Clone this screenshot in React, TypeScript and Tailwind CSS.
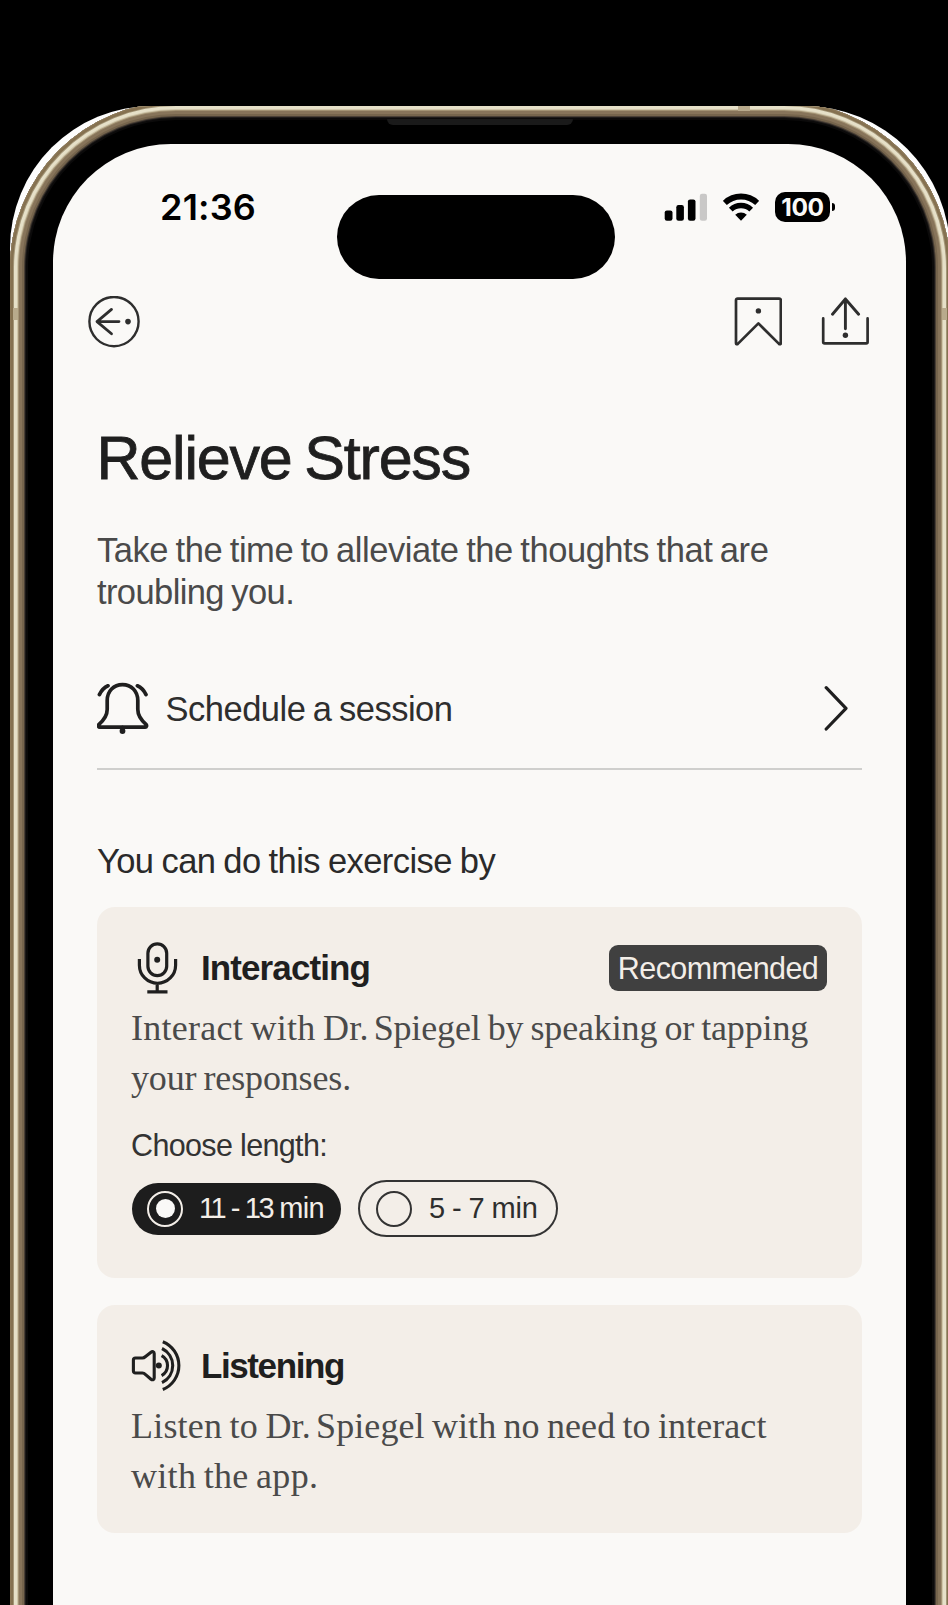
import React from "react";

const ink = "#1f1f1f";

function BackIcon() {
  return (
    <svg width="52" height="52" viewBox="0 0 52 52" fill="none" stroke="#2e2e2e" strokeWidth="2.4" strokeLinecap="round" strokeLinejoin="round">
      <circle cx="26" cy="25.6" r="24.6" />
      <path d="M23.5 13.4 9 25.6l14.5 12.2M9 25.6h22" strokeWidth="2.8" />
      <circle cx="40" cy="25.6" r="2.8" fill="#2e2e2e" stroke="none" />
    </svg>
  );
}

function BookmarkIcon() {
  return (
    <svg width="48" height="50" viewBox="-1 0.4 48 50" fill="none" stroke="#2e2e2e" strokeWidth="2.7" strokeLinecap="round" strokeLinejoin="round">
      <path d="M2.6 2h41.6a1.6 1.6 0 0 1 1.6 1.6V46.6c0 1-1 1.4-1.8.7L23.4 26.8 2.8 47.3c-.8.7-1.8.3-1.8-.7V3.6A1.6 1.6 0 0 1 2.6 2z" />
      <circle cx="23.4" cy="14.3" r="2.7" fill="#2e2e2e" stroke="none" />
    </svg>
  );
}

function ShareIcon() {
  return (
    <svg width="48" height="50" viewBox="-1 0.4 48 50" fill="none" stroke="#2e2e2e" strokeWidth="2.7" strokeLinecap="round" strokeLinejoin="round">
      <path d="M1.2 21.8V45.4a1.4 1.4 0 0 0 1.4 1.4h41.6a1.4 1.4 0 0 0 1.4-1.4V21.8" />
      <path d="M10.5 17.6 23.4 2.4l13.2 15.2M23.4 2.4v29.8" strokeWidth="2.9" />
      <circle cx="23.4" cy="38.6" r="2.7" fill="#2e2e2e" stroke="none" />
    </svg>
  );
}

function SignalIcon() {
  return (
    <svg width="44" height="28" viewBox="0 0 44 28">
      <rect x="0.7" y="17.4" width="7.8" height="10.3" rx="2.2" />
      <rect x="12.3" y="12" width="7.6" height="15.7" rx="2.2" />
      <rect x="23.9" y="6.4" width="7.6" height="21.3" rx="2.2" />
      <rect x="35.8" y="0.8" width="7.2" height="26.9" rx="2.2" fill="#c9c8c7" />
    </svg>
  );
}

function WifiIcon() {
  return (
    <svg width="36" height="28" viewBox="0 0 36 28" fill="none" stroke="#000">
      <path d="M1.8 10A23.4 23.4 0 0 1 34.2 10" strokeWidth="5.8" />
      <path d="M7.8 16.6A14.8 14.8 0 0 1 28.2 16.6" strokeWidth="5.4" />
      <path d="M18 27.7 12.2 21.8A8.6 8.6 0 0 1 23.8 21.8z" fill="#000" stroke="none" />
    </svg>
  );
}

function BellIcon() {
  return (
    <svg width="52" height="52" viewBox="0 0 52 52" fill="none" stroke={ink} strokeWidth="3.7" strokeLinecap="round" strokeLinejoin="round">
      <path d="M10.2 18.6C10.2 9 16.8 2.6 25.5 2.6S40.8 9 40.8 18.6V27.6C40.8 34.4 44.2 38.2 49 42.4C50 43.4 49.6 45.2 48.2 45.2H2.8C1.4 45.2 1 43.4 2 42.4C6.8 38.2 10.2 34.4 10.2 27.6Z" />
      <path d="M2.4 12.6C4.4 8.6 7.2 5.4 11 3.8M40.4 3.8C44.2 5.4 47 8.6 49 12.6" />
      <path d="M25.5 45v4" strokeWidth="3" />
      <circle cx="25.5" cy="49" r="2.9" fill={ink} stroke="none" />
    </svg>
  );
}

function MicIcon() {
  return (
    <svg width="52" height="52" viewBox="0 0 52 52" fill="none" stroke={ink} strokeWidth="3.2">
      <rect x="16.9" y="1.9" width="18.8" height="31.8" rx="9.4" />
      <path d="M8.4 17v6.2a18.1 18.1 0 0 0 36.2 0V17M26.2 41.3v8.4M16.3 49.8h20.2" />
      <circle cx="26.2" cy="17.7" r="3" fill={ink} stroke="none" />
    </svg>
  );
}

function SpeakerIcon() {
  return (
    <svg width="52" height="52" viewBox="0 0 52 52" fill="none" stroke={ink} strokeWidth="3.1" strokeLinejoin="round">
      <path d="M4.4 18H11.4C12.8 18 13.6 17.4 14.6 16.5L20 12.2C21.4 11.1 23.2 11.6 23.2 13.4V38C23.2 39.8 21.4 40.3 20 39.2L14.6 34.6C13.6 33.6 12.8 33 11.4 33H4.4C3.2 33 2.4 32.2 2.4 31V20C2.4 18.8 3.2 18 4.4 18Z" />
      <circle cx="27.8" cy="25.6" r="3" fill={ink} stroke="none" />
      <path d="M30.6 15.6a11.4 11.4 0 0 1 0 20M31 8.5a19 19 0 0 1 0 34.2M31.8 1.7a25.8 25.8 0 0 1 0 47.8" />
    </svg>
  );
}

function StatusBar() {
  return (
    <div className="flex h-[135px] items-start pt-[51px]">
      <div className="ml-[107px] flex h-6 w-[177px] items-center font-[Inter,sans-serif] text-[36px] font-semibold leading-6 tracking-[0.2px] text-black">
        21:36
      </div>
      <div className="h-[84px] w-[278px] rounded-full bg-black" />
      <div className="ml-[49px] flex h-6 items-center">
        <SignalIcon />
        <div className="ml-[15px]">
          <WifiIcon />
        </div>
        <div className="ml-4 flex h-[30px] w-[55px] items-center justify-center rounded-[10px] bg-black font-[Inter,sans-serif] text-[24.5px] font-bold leading-none tracking-[-0.4px] text-[#faf9f7]">
          100
        </div>
        <div className="ml-[2px] h-2 w-[3px] rounded-r-full bg-black" />
      </div>
    </div>
  );
}

export default function App() {
  return (
    <div className="h-[1605px] w-[948px] overflow-hidden bg-black pt-[106px] font-['Liberation_Sans',Arial,sans-serif]">
      <div className="ml-[10px] h-[1499px] w-[940px] overflow-hidden rounded-tl-[142px] rounded-tr-[146px] bg-[#fdfdfd]">
        <div className="relative -mt-[4px] flex h-[1800px] w-[940px] flex-col rounded-[166px] bg-black pt-[17px] pl-[43px] pr-[44px] shadow-[inset_0_0_0_1px_#8a7656,inset_0_0_0_3px_#857150,inset_0_0_0_4px_#a39577,inset_0_0_0_7px_#e6e0c8,inset_0_0_0_8px_#d0c6aa,inset_0_0_0_9px_#a39374,inset_0_0_0_12px_#87745a,inset_0_0_0_14px_#76654d,inset_0_0_0_15px_#4a4036,inset_0_0_0_16px_#1d1a19,inset_0_0_0_18px_#0b0a0a]">
          <div className="absolute left-[3px] top-[206px] h-3 w-[5px] bg-[#b8aa8c]" />
          <div className="absolute right-[3px] top-[206px] h-3 w-[5px] bg-[#b8aa8c]" />
          <div className="absolute left-[728px] top-[4px] h-[5px] w-3 bg-[#b8aa8c]" />
          <div className="mb-[19px] h-[6px] w-[186px] shrink-0 self-center rounded-b-md bg-[#1a1a1a]" />
          <main className="flex min-h-0 flex-1 flex-col rounded-t-[118px] bg-[#faf9f7]">
            <StatusBar />

            <nav className="mt-[17px] flex h-[52px] items-center justify-between pl-[35px] pr-[37px]">
              <BackIcon />
              <div className="flex gap-[39px]">
                <BookmarkIcon />
                <ShareIcon />
              </div>
            </nav>

            <div className="px-[44px] pt-[74px]">
              <h1 className="-ml-[0.5px] h-[72px] whitespace-nowrap text-[61px] leading-[72px] tracking-[-1.2px] [word-spacing:-3px] text-[#1f1f1f] [-webkit-text-stroke:0.8px_#1f1f1f]">
                Relieve Stress
              </h1>
              <p className="mt-[35px] whitespace-nowrap text-[34.5px] leading-[42px] tracking-[-0.45px] [word-spacing:-1.6px] text-[#4a4a4a]">
                Take the time to alleviate the thoughts that are
                <br />
                <span className="tracking-[-0.6px]">troubling you.</span>
              </p>

              <div className="mt-[69px] flex h-[52px] items-center">
                <BellIcon />
                <span className="ml-[16.5px] flex-1 pt-px text-[34.5px] leading-[42px] tracking-[-0.5px] [word-spacing:-1.6px] text-[#2e2e2e]">Schedule a session</span>
                <svg className="mr-[14px]" width="24" height="46" viewBox="0 0 24 46" fill="none" stroke={ink} strokeWidth="3.2" strokeLinecap="round" strokeLinejoin="round">
                  <path d="M2.2 2.7 22 23.3 2.2 44" />
                </svg>
              </div>
              <div className="mt-[34px] h-[2px] bg-[#cfcfcd]" />

              <h2 className="mt-[70px] whitespace-nowrap text-[34.5px] leading-[42px] tracking-[-0.58px] [word-spacing:-1px] text-[#2a2a2a]">
                You can do this exercise by
              </h2>

              <section className="mt-[25px] h-[371px] rounded-[18px] bg-[#f3eee8] pl-[34px] pr-[35px] pt-[35px]">
                <div className="flex h-[52px] items-center">
                  <MicIcon />
                  <span className="ml-[18px] text-[35px] font-bold leading-[42px] tracking-[-0.9px] text-[#1f1f1f]">Interacting</span>
                  <span className="ml-auto flex h-[46px] w-[218px] items-center justify-center rounded-[9px] bg-[#404040] pt-px text-[30.5px] tracking-[-0.59px] text-[#f3eee8]">
                    Recommended
                  </span>
                </div>
                <p className="mt-[10px] whitespace-nowrap font-['Liberation_Serif',serif] text-[36px] leading-[49.5px] tracking-[-0.14px] [word-spacing:-1.8px] text-[#4a4a4a]">
                  <span className="tracking-[0.26px]">Interact with Dr.</span>
                  <span className="[word-spacing:-4px]"> </span>Spiegel by speaking or tapping
                  <br />
                  <span className="tracking-[-0.14px]">your responses.</span>
                </p>
                <div className="mt-[24px] text-[30.5px] leading-9 tracking-[-0.65px] text-[#333333]">Choose length:</div>
                <div className="mt-[17px] flex h-[57px] items-center gap-[17px]">
                  <div className="ml-px flex h-[52px] w-[209px] items-center rounded-full bg-[#1d1d1d] pl-[15px] text-[29px] text-[#f3eee8]">
                    <span className="flex h-9 w-9 items-center justify-center rounded-full border-2 border-[#f3eee8]">
                      <span className="h-[19px] w-[19px] rounded-full bg-[#faf9f7]" />
                    </span>
                    <span className="ml-4 whitespace-nowrap pt-px tracking-[-2.4px] [word-spacing:0.9px]">
                      11 - 13<span className="ml-[7px] tracking-[-0.6px]">min</span>
                    </span>
                  </div>
                  <div className="flex h-[57px] w-[200px] items-center rounded-full border-2 border-[#333333] pl-4 text-[29px] text-[#2e2e2e]">
                    <span className="h-9 w-9 rounded-full border-2 border-[#333333]" />
                    <span className="ml-[17px] whitespace-nowrap pt-px tracking-[-0.2px] [word-spacing:-0.8px]">5 - 7 min</span>
                  </div>
                </div>
              </section>

              <section className="mt-[27px] h-[228px] rounded-[18px] bg-[#f3eee8] px-[34px] pt-[35px]">
                <div className="flex h-[52px] items-center">
                  <SpeakerIcon />
                  <span className="ml-[18px] text-[35px] font-bold leading-[42px] tracking-[-1.4px] text-[#1f1f1f]">Listening</span>
                </div>
                <p className="mt-[10px] whitespace-nowrap font-['Liberation_Serif',serif] text-[36px] leading-[49.5px] tracking-[0.08px] [word-spacing:-1.8px] text-[#4a4a4a]">
                  <span className="tracking-[0.2px]">Listen to Dr.</span>
                  <span className="[word-spacing:-4px]"> </span>Spiegel with no need to interact
                  <br />
                  <span className="tracking-[0.3px]">with the app.</span>
                </p>
              </section>
            </div>
          </main>
        </div>
      </div>
    </div>
  );
}
